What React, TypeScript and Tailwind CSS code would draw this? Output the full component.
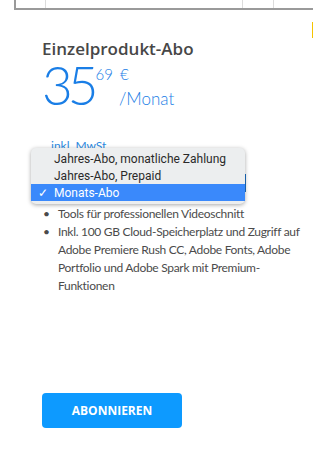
export default function App() {
  const options = ['Jahres-Abo, monatliche Zahlung', 'Jahres-Abo, Prepaid', 'Monats-Abo']
  const selected = 2

  return (
    <div className="relative h-[455px] w-[313px] overflow-hidden bg-white font-['Open_Sans',sans-serif]">
      {/* table remnant at the top */}
      <div className="ml-[14px] flex h-[10px] border-b-2 border-l-2 border-[#9a9a9a]">
        <div className="w-[30px] border-r border-[#dcdcdc]" />
        <div className="w-[197px] border-r border-[#dcdcdc]" />
        <div className="w-[31px] border-r border-[#dcdcdc]" />
      </div>
      <div className="absolute right-0 top-[22px] h-[16px] w-[1px] bg-[#f5c400]" />

      <div className="pl-[42px] pt-[28px]">
        <h2 className="text-[17px] font-semibold leading-[22px] text-[#474747]">Einzelprodukt-Abo</h2>

        <div className="flex items-start font-['Lato',sans-serif] text-[#1a7ee6]">
          <span className="text-[53px] font-light leading-[50px] tracking-[-5px]">35</span>
          <span className="ml-[2px] mt-[5px] text-[15px] font-light leading-[18px]">69</span>
          <div className="ml-[7px] mt-[5px] flex flex-col">
            <span className="text-[15px] font-light leading-[18px]">€</span>
            <span className="-ml-[1px] mt-[6px] text-[17px] font-light leading-[20px]">/Monat</span>
          </div>
        </div>

        <div className="relative mt-[29px] h-[66px]">
          <span className="ml-[9px] block font-['Lato',sans-serif] text-[12px] leading-[14px] text-[#2d8ae0]">
            inkl. MwSt.
          </span>

          {/* underlying select edge */}
          <div className="absolute left-[202px] top-[35px] h-[18px] w-[2px] bg-[#1b6fc4]" />

          {/* native select popup */}
          <div className="absolute left-[-11px] top-[9px] w-[214px] rounded-[5px] bg-[#eceeef] pb-[3px] pt-[2px] font-['Roboto',sans-serif] shadow-[0_1px_4px_rgba(0,0,0,0.35)]">
            {options.map((o, i) => (
              <div
                key={o}
                className={`flex h-[17px] items-center text-[12px] ${
                  i === selected ? 'bg-[#3a89fb] text-white' : 'text-[#2a2a2a]'
                }`}
              >
                <span className="w-[23px] shrink-0 pl-[7px] text-[12px]">{i === selected ? '✓' : ''}</span>
                <span>{o}</span>
              </div>
            ))}
          </div>
        </div>

        <ul className="w-[258px] font-['Lato',sans-serif] text-[12px] leading-[18px] tracking-[-0.3px] text-[#4b4b4b]">
          <li className="flex">
            <span className="w-[16px] shrink-0 pl-[1px]">•</span>
            <span>Tools für professionellen Videoschnitt</span>
          </li>
          <li className="flex">
            <span className="w-[16px] shrink-0 pl-[1px]">•</span>
            <span>
              Inkl. 100 GB Cloud-Speicherplatz und Zugriff auf Adobe Premiere Rush CC, Adobe Fonts, Adobe Portfolio und
              Adobe Spark mit Premium-Funktionen
            </span>
          </li>
        </ul>

        <button className="mt-[98px] h-[35px] w-[140px] rounded-[4px] bg-[#0d9aff] text-[12px] font-bold text-white">
          ABONNIEREN
        </button>
      </div>
    </div>
  )
}
